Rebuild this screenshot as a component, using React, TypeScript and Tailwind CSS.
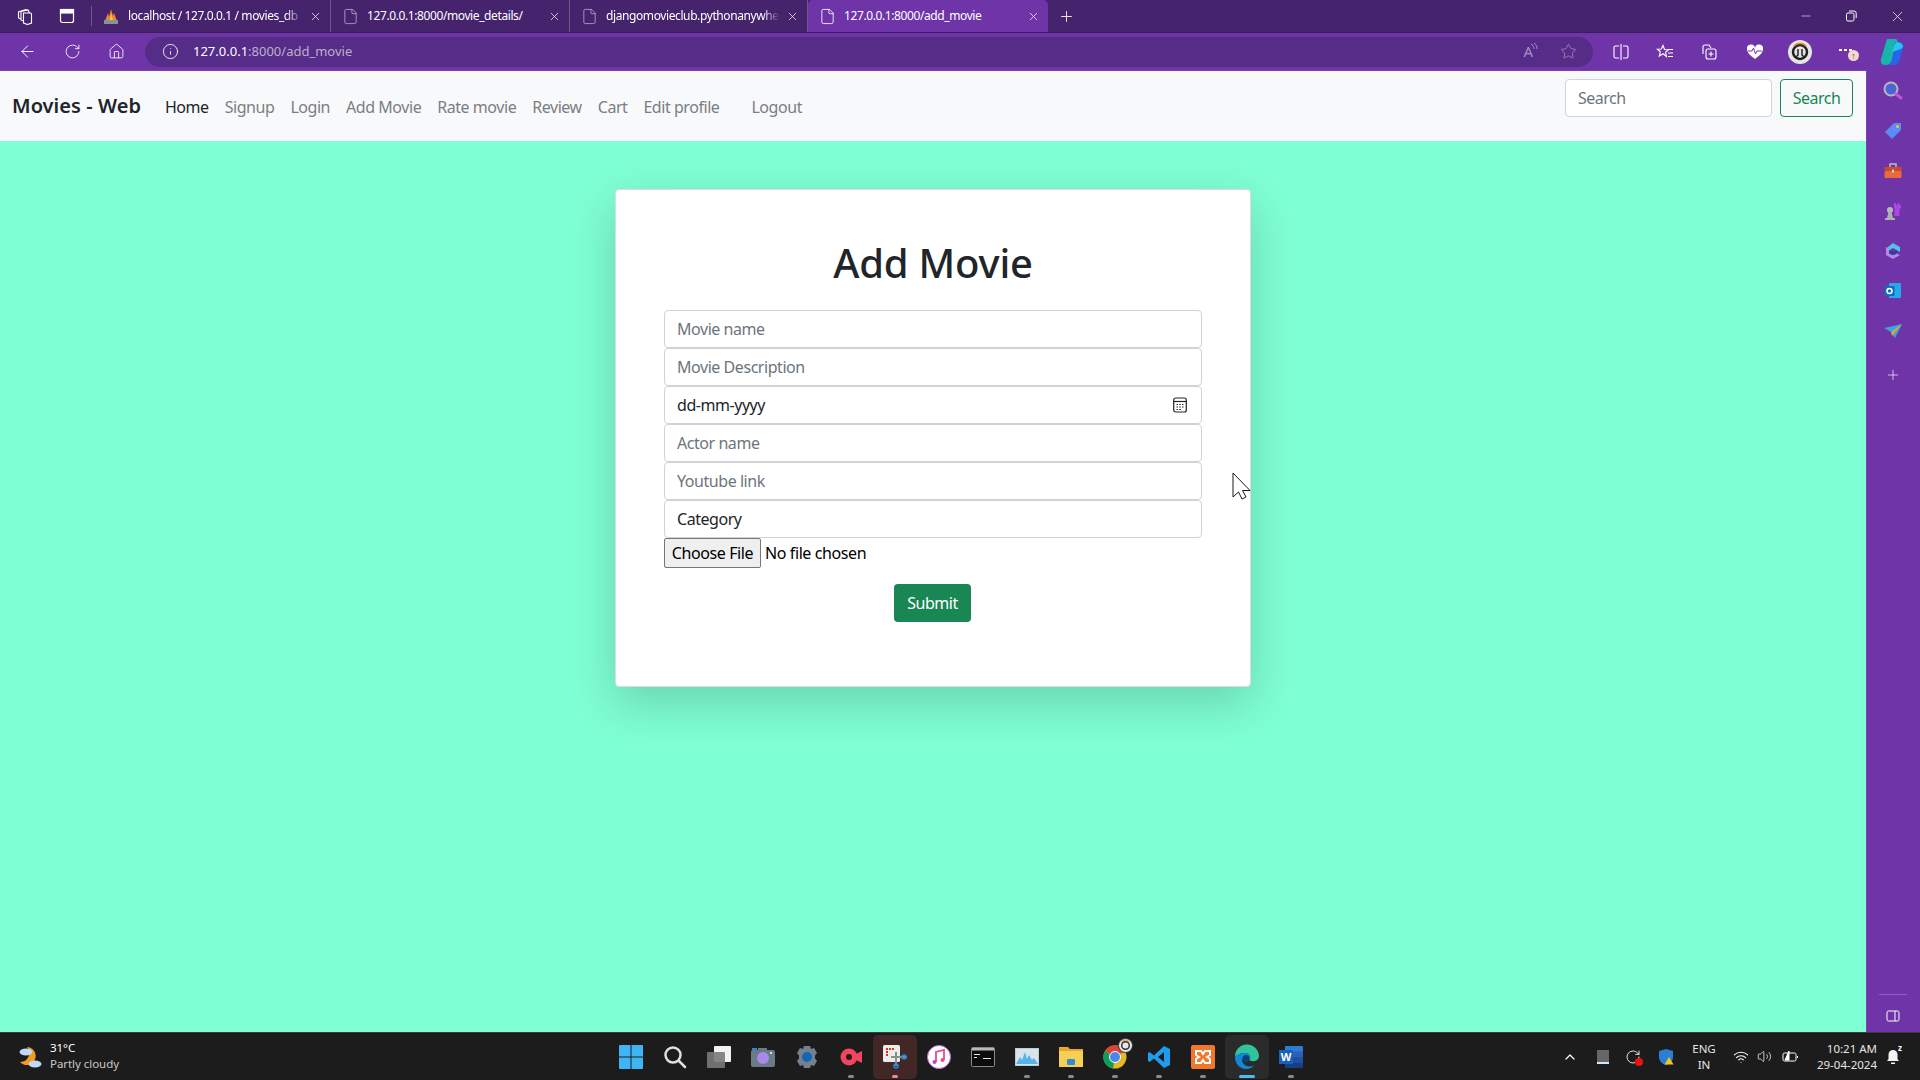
import React from "react";
import { ArrowLeft, RotateCw, Home, Info, Star, Plus, X, Minus, File, ChevronUp, Wifi, Volume2 } from "lucide-react";

const font = "font-['Noto_Sans','Liberation_Sans',sans-serif]";

function Tab({ icon, text, w, active, fade }: { icon: React.ReactNode; text: string; w: string; active?: boolean; fade?: boolean }) {
  return (
    <div className={`${w} h-[32px] flex items-center shrink-0 pl-[10px] pr-[8px] ${active ? "bg-[#6f35a8] rounded-t-[5px]" : "border-r border-[#6c5a85]"}`}>
      <span className="w-[18px] h-[18px] flex items-center justify-center shrink-0">{icon}</span>
      <span className={`ml-[8px] flex-1 text-[12px] tracking-[-0.4px] text-white whitespace-nowrap overflow-hidden ${fade ? "[mask-image:linear-gradient(to_right,black_90%,transparent)]" : ""}`}>{text}</span>
      <X size={13} strokeWidth={1.3} className="text-white shrink-0 ml-[6px]" />
    </div>
  );
}

function Field({ placeholder, value }: { placeholder?: string; value?: string }) {
  return (
    <input
      readOnly
      placeholder={placeholder}
      value={value ?? ""}
      className="block w-full h-[38px] shrink-0 px-[12px] bg-white border border-[#ced4da] rounded-[4px] text-[16px] tracking-[-0.45px] text-[#212529] placeholder:text-[#6c757d] outline-none"
    />
  );
}

function TaskIcon({ children, dot, active, ring }: { children: React.ReactNode; dot?: string; active?: boolean; ring?: string }) {
  return (
    <div className={`relative w-[44px] h-[44px] flex items-center justify-center rounded-[5px] ${ring ?? ""}`}>
      {children}
      {dot && <span className={`absolute bottom-[1px] left-1/2 -translate-x-1/2 h-[3px] rounded-full ${active ? "w-[16px]" : "w-[6px]"} ${dot}`} />}
    </div>
  );
}

function SideIcon({ children, mb }: { children: React.ReactNode; mb?: string }) {
  return <div className={`h-[40px] flex items-center justify-center ${mb ?? ""}`}>{children}</div>;
}

export default function App() {
  return (
    <div className={`${font} relative w-[1920px] h-[1080px] flex flex-col overflow-hidden bg-[#7fffd4]`}>
      {/* Tab strip */}
      <div className="h-[32px] shrink-0 bg-[#45246d] flex items-center">
        <div className="w-[92px] flex items-center pl-[17px] gap-[25px] shrink-0 h-[20px] border-r border-[#6c5a85]">
          <svg width="17" height="17" viewBox="0 0 17 17" fill="none" stroke="#fff" strokeWidth="1.1">
            <path d="M6.500 5h7a1 1 0 0 1 1 1v9l-4 1.500-4-1.500z" />
            <path d="M6.500 13 4 12V3.500l7-1.500 1.500 3" />
            <path d="M4 11 1.500 10V4l7-2.500L10 2.500" />
          </svg>
          <svg width="16" height="16" viewBox="0 0 16 16" fill="none" stroke="#fff" strokeWidth="1.2">
            <rect x="1.500" y="1.500" width="13" height="13" rx="2" />
            <rect x="1.500" y="1.500" width="13" height="3.500" fill="#fff" />
          </svg>
        </div>
        <Tab
          w="w-[239px]"
          fade
          text="localhost / 127.0.0.1 / movies_db"
          icon={
            <svg width="18" height="18" viewBox="0 0 18 18">
              <path d="M3 14 6 6l1 4 2-8 2 7 1-3 3 8z" fill="#e8892b" />
              <path d="M8 13 9 6l2 7z" fill="#f7c64d" />
              <rect x="2" y="13" width="14" height="4" fill="#8b8f9a" />
            </svg>
          }
        />
        <Tab w="w-[239px]" text="127.0.0.1:8000/movie_details/" icon={<File size={17} strokeWidth={1} className="text-[#c9bcd8]" />} />
        <Tab w="w-[238px]" fade text="djangomovieclub.pythonanywhe" icon={<File size={17} strokeWidth={1} className="text-[#c9bcd8]" />} />
        <Tab w="w-[240px]" active text="127.0.0.1:8000/add_movie" icon={<File size={17} strokeWidth={1.2} className="text-white" />} />
        <Plus size={17} strokeWidth={1.2} className="text-white ml-[10px]" />
        <div className="flex-1" />
        <div className="flex items-center text-white pr-[14px] gap-[31px]">
          <Minus size={14} strokeWidth={1} />
          <svg width="14" height="14" viewBox="0 0 14 14" fill="none" stroke="#fff" strokeWidth="1">
            <rect x="2.500" y="4" width="7.500" height="8" rx="1.500" />
            <path d="M5 2h5a2.200 2.200 0 0 1 2.200 2.200V9" />
          </svg>
          <X size={17} strokeWidth={1} />
        </div>
      </div>

      {/* Toolbar */}
      <div className="h-[38px] shrink-0 bg-[#6f35a8] border-t border-[#3a1d5f] flex items-center pl-[18px]">
        <ArrowLeft size={19} strokeWidth={1.2} className="text-white" />
        <RotateCw size={17} strokeWidth={1.2} className="text-white ml-[27px]" />
        <Home size={17} strokeWidth={1.2} className="text-white ml-[27px]" />
        <div className="ml-[20px] w-[1448px] h-[30px] rounded-full bg-[#562c89] flex items-center pl-[17px] pr-[16px]">
          <Info size={17} strokeWidth={1.2} className="text-white" />
          <span className="ml-[14px] text-[13px] text-white">
            127.0.0.1<span className="text-[#bcb0cc]">:8000/add_movie</span>
          </span>
          <div className="flex-1" />
          <span className="text-[#a88fc4] text-[15px] leading-none mr-[-3px]">A</span>
          <svg width="8" height="14" viewBox="0 0 8 14" fill="none" stroke="#a88fc4" strokeWidth="1" className="mb-[6px]">
            <path d="M1 2c2 1 3 3 3 5M4 1c2 1.500 3 3 3 6" />
          </svg>
          <Star size={17} strokeWidth={1.1} className="text-[#a88fc4] ml-[22px]" />
        </div>
        <div className="flex items-center ml-[20px]">
          <svg width="16" height="18" viewBox="0 0 16 18" fill="none" stroke="#fff" strokeWidth="1.100">
            <path d="M6 3H2.500a1.500 1.500 0 0 0-1.500 1.500v9A1.500 1.500 0 0 0 2.500 15H6M10 3h3.500A1.500 1.500 0 0 1 15 4.500v9a1.500 1.500 0 0 1-1.500 1.500H10M8 1v16" />
          </svg>
          <svg width="18" height="18" viewBox="0 0 18 18" fill="none" stroke="#fff" strokeWidth="1.100" className="ml-[27px]">
            <path d="M7 2.500l1.500 4 4 .2-3 2.600 1 4.200L7 10.700 3.300 13l1-4.200-3-2.600 4-.2zM12 6.500h5M12 10h5M12 13.500h5" />
          </svg>
          <svg width="18" height="18" viewBox="0 0 18 18" fill="none" stroke="#fff" strokeWidth="1.100" className="ml-[26px]">
            <path d="M3 11V4a2 2 0 0 1 2-2h4l2 3" />
            <rect x="6" y="6" width="10" height="10" rx="2" />
            <path d="M11 8.500v5M8.500 11h5" />
          </svg>
          <svg width="18" height="18" viewBox="0 0 18 18" className="ml-[28px]">
            <path d="M9 16C5 13 1 10 1 6a4 4 0 0 1 8-1 4 4 0 0 1 8 1c0 4-4 7-8 10z" fill="#fff" />
            <path d="M2 8h4l1.500-3 2 6 1.500-3h5" fill="none" stroke="#6f35a8" strokeWidth="1" />
          </svg>
          <svg width="26" height="26" viewBox="0 0 26 26" className="ml-[23px]">
            <circle cx="13" cy="13" r="12" fill="#e5e5e5" />
            <circle cx="13" cy="13" r="7" fill="none" stroke="#222" strokeWidth="2.500" />
            <path d="M7 7a8 8 0 0 1 12 0" fill="none" stroke="#e8892b" strokeWidth="1.800" />
            <path d="M11 10v6l-2 2M15 10v6l2 2" fill="none" stroke="#222" strokeWidth="1.500" />
          </svg>
          <div className="relative w-[24px] h-[18px] ml-[23px]">
            <span className="absolute left-[3px] top-[6px] w-[3px] h-[2px] bg-white" />
            <span className="absolute left-[8px] top-[6px] w-[3px] h-[2px] bg-white" />
            <span className="absolute left-[13px] top-[6px] w-[3px] h-[2px] bg-white" />
            <span className="absolute left-[12px] top-[7px] w-[11px] h-[11px] rounded-full bg-[#f3d8c8] text-[#6f35a8] text-[9px] leading-[11px] text-center font-bold">↑</span>
          </div>
          <svg width="26" height="28" viewBox="0 0 26 28" className="ml-[19px]">
            <path d="M8 1h8c2 0 3 1 2 4L13 22c-1 3-3 5-6 5-4 0-6-2-5-6z" fill="#17b6a8" />
            <path d="M16 4h4c3 0 5 2 4 6l-3 11c-1 4-3 6-7 6H7c3 0 5-2 6-5z" fill="#2a62ea" />
            <path d="M17 4c-2 4-3 7-4 10l6-2c3-1 5-2 5-4-1-2-3-4-7-4z" fill="#26c6f0" />
          </svg>
        </div>
      </div>

      {/* Body */}
      <div className="h-[962px] shrink-0 flex">
        <div className="w-[1866px] shrink-0 flex flex-col border-t border-[#7d3fb8] bg-[#7fffd4]">
          {/* Navbar */}
          <nav className="h-[70px] shrink-0 bg-[#f8f9fa] flex items-center pl-[12px] pr-[13px]">
            <span className="text-[20px] tracking-[0.05px] font-semibold text-[#212529] leading-none mr-[24px]">Movies - Web</span>
            <div className="flex items-center gap-[16px] text-[16px] tracking-[-0.45px] text-[#7b7e82] mt-[1px]">
              <span className="text-[#212529]">Home</span>
              <span>Signup</span>
              <span>Login</span>
              <span>Add Movie</span>
              <span>Rate movie</span>
              <span>Review</span>
              <span>Cart</span>
              <span>Edit profile</span>
              <span className="ml-[16px]">Logout</span>
            </div>
            <div className="flex-1" />
            <div className="flex items-center gap-[8px] mb-[16px]">
              <input
                readOnly
                placeholder="Search"
                className="w-[207px] h-[38px] px-[12px] bg-white border border-[#ced4da] rounded-[4px] text-[16px] tracking-[-0.5px] placeholder:text-[#6c757d] outline-none"
              />
              <button className="w-[73px] h-[38px] border border-[#198754] rounded-[4px] text-[#198754] text-[16px] tracking-[-0.5px]">Search</button>
            </div>
          </nav>
          {/* Page */}
          <div className="flex-1 flex justify-center items-start pt-[48px]">
            <div className="w-[636px] h-[498px] bg-white rounded-[4px] border border-[#d9dedc] shadow-[0_16px_48px_rgba(0,0,0,0.175)] px-[48px] flex flex-col">
              <h1 className="text-center text-[40px] tracking-[-0.2px] font-medium text-[#212529] leading-[48px] mt-[49px] mb-[23px]">Add Movie</h1>
              <div className="flex flex-col">
                <Field placeholder="Movie name" />
                <Field placeholder="Movie Description" />
                <div className="relative">
                  <Field value="dd-mm-yyyy" />
                  <svg width="14" height="16" viewBox="0 0 14 16" fill="none" stroke="#212529" strokeWidth="1.200" className="absolute right-[15px] top-[11px]">
                    <rect x="0.700" y="1" width="12.600" height="14" rx="2" />
                    <path d="M0.700 4.500h12.600" />
                    <path d="M3.500 7.500h1.500M6.300 7.500h1.500M9 7.500h1.500M3.500 10h1.500M6.300 10h1.500M9 10h1.500M3.500 12.500h1.500M6.300 12.500h1.500" />
                  </svg>
                </div>
                <Field placeholder="Actor name" />
                <Field placeholder="Youtube link" />
                <Field value="Category" />
                <div className="flex items-center h-[30px] text-[16px] tracking-[-0.4px] text-black">
                  <button className="w-[97px] h-[30px] bg-[#efefef] border border-[#767676] rounded-[2px]">Choose File</button>
                  <span className="ml-[4px]">No file chosen</span>
                </div>
              </div>
              <div className="flex justify-center mt-[16px]">
                <button className="w-[77px] h-[38px] mr-[1px] bg-[#198754] rounded-[4px] text-white text-[16px] tracking-[-0.5px]">Submit</button>
              </div>
            </div>
          </div>
        </div>

        {/* Edge sidebar */}
        <div className="w-[54px] shrink-0 bg-[#6f35a8] border-l border-[#7d3fb8] flex flex-col items-center pt-[1px] pr-[2px]">
          <SideIcon>
            <svg width="20" height="20" viewBox="0 0 20 20">
              <circle cx="8" cy="8" r="6.500" fill="#4a64d8" stroke="#b7b7b7" strokeWidth="2" />
              <path d="m13 13 5 4" stroke="#c74fe0" strokeWidth="3" strokeLinecap="round" />
            </svg>
          </SideIcon>
          <SideIcon>
            <svg width="18" height="18" viewBox="0 0 18 18">
              <path d="M10 1h7v7l-9 9-7-7z" fill="#5a8cf5" />
              <circle cx="13.500" cy="4.500" r="1.500" fill="#f5c518" />
            </svg>
          </SideIcon>
          <SideIcon>
            <svg width="18" height="18" viewBox="0 0 18 18">
              <path d="M6 5V2h6v3" fill="none" stroke="#bdbdbd" strokeWidth="1.500" />
              <rect x="0.500" y="5" width="17" height="4" fill="#cc4a26" />
              <rect x="0.500" y="9" width="17" height="7" rx="1" fill="#ea6a3a" />
              <rect x="8" y="7.500" width="2" height="3" fill="#d4d4d4" />
            </svg>
          </SideIcon>
          <SideIcon>
            <svg width="18" height="19" viewBox="0 0 18 19">
              <path d="M10 1h2v2h1.500V1h2v2H17v3l-1.500 1v7h-5V7L10 6z" fill="#a848e0" />
              <circle cx="6" cy="8" r="3" fill="#b8b8b8" />
              <path d="M4.500 10h3l1.500 6h-6zM1 16h10v2H1z" fill="#b0b0b0" />
            </svg>
          </SideIcon>
          <SideIcon>
            <svg width="18" height="18" viewBox="0 0 18 18">
              <path d="M9 1 16 5v5L9 6 4 9V5z" fill="#4fc3e8" />
              <path d="M2 5v8l7 4 7-4-7-3-4 2V6z" fill="#b18be0" />
              <path d="M5 9a4 4 0 1 0 8 0" fill="#3b3aa0" />
            </svg>
          </SideIcon>
          <SideIcon>
            <svg width="18" height="18" viewBox="0 0 18 18">
              <rect x="5" y="1" width="12" height="15" rx="1" fill="#28a8ea" />
              <rect x="0.500" y="4" width="10" height="10" rx="1" fill="#0f6cbd" />
              <circle cx="5.500" cy="9" r="2.500" fill="none" stroke="#fff" strokeWidth="1.500" />
            </svg>
          </SideIcon>
          <SideIcon mb="mb-[4px]">
            <svg width="18" height="14" viewBox="0 0 18 14">
              <path d="M0 4 18 0 11 14 7 8z" fill="#3ba4e6" />
              <path d="M7 8 18 0 8 12z" fill="#e8a32b" />
            </svg>
          </SideIcon>
          <SideIcon>
            <Plus size={16} strokeWidth={1} className="text-white" />
          </SideIcon>
          <div className="flex-1" />
          <div className="w-[28px] h-px bg-[#8d60bf] mb-[14px]" />
          <svg width="14" height="14" viewBox="0 0 14 14" fill="none" stroke="#fff" strokeWidth="1" className="mb-[9px]">
            <rect x="1" y="2" width="12" height="10" rx="1.500" />
            <path d="M9 2v10" />
          </svg>
        </div>
      </div>

      {/* Taskbar */}
      <div className="h-[48px] shrink-0 bg-[#1c1c1c] border-t border-[#3b3b3b] flex items-center text-white">
        <div className="w-[609px] shrink-0 flex items-center pl-[18px]">
          <svg width="26" height="26" viewBox="0 0 26 26">
            <path d="M9 3a9 9 0 1 1-7 15 9 9 0 0 0 7-15z" fill="#f09a21" />
            <ellipse cx="8" cy="8" rx="6.500" ry="3.500" fill="#c3d8f5" />
            <ellipse cx="17" cy="20" rx="6.500" ry="3.500" fill="#c3d8f5" />
          </svg>
          <div className="ml-[6px] mb-[2px] text-[11.500px] leading-[16px] tracking-[-0.05px]">
            <div>31°C</div>
            <div className="text-[#c8c8c8]">Partly cloudy</div>
          </div>
        </div>
        <div className="flex items-center">
          <TaskIcon>
            <svg width="24" height="24" viewBox="0 0 24 24">
              <path d="M0 1a1 1 0 0 1 1-1h10.500v11.500H0zM12.500 0H23a1 1 0 0 1 1 1v10.500H12.500zM0 12.500h11.500V24H1a1 1 0 0 1-1-1zM12.500 12.500H24V23a1 1 0 0 1-1 1H12.500z" fill="#3fb5f5" />
            </svg>
          </TaskIcon>
          <TaskIcon>
            <svg width="24" height="24" viewBox="0 0 24 24" fill="none" stroke="#e0e0e0" strokeWidth="2.500">
              <circle cx="10" cy="10" r="7.500" />
              <path d="m16 16 6 6" strokeLinecap="round" />
            </svg>
          </TaskIcon>
          <TaskIcon>
            <svg width="24" height="24" viewBox="0 0 24 24">
              <rect x="7" y="1" width="17" height="16" rx="1" fill="#f2f2f2" />
              <rect x="0" y="7" width="18" height="16" rx="1" fill="#7a7a7a" fillOpacity="0.9" />
            </svg>
          </TaskIcon>
          <TaskIcon>
            <svg width="24" height="20" viewBox="0 0 24 20">
              <rect x="0" y="3" width="24" height="17" rx="2" fill="#6b7a88" />
              <rect x="7" y="1" width="9" height="4" fill="#6b7a88" />
              <rect x="1" y="1" width="5" height="2" fill="#2b88d8" />
              <circle cx="12" cy="11" r="6" fill="#a98ae8" />
              <circle cx="20" cy="6" r="1" fill="#fff" />
            </svg>
          </TaskIcon>
          <TaskIcon>
            <svg width="24" height="24" viewBox="0 0 24 24">
              <path d="M9 1h6l1 3 3-1 3 5-2 2.500v3l2 2.500-3 5-3-1-1 3H9l-1-3-3 1-3-5 2-2.500v-3L2 8l3-5 3 1z" fill="#74828f" />
              <circle cx="12" cy="12" r="5" fill="#1565b5" />
            </svg>
          </TaskIcon>
          <TaskIcon dot="bg-[#8a8a8a]">
            <svg width="22" height="20" viewBox="0 0 22 20">
              <circle cx="9" cy="10" r="8.500" fill="#f0465e" />
              <circle cx="9" cy="10" r="3" fill="#2a1a1e" />
              <path d="M14 8l8-4v12l-8-4z" fill="#f0465e" />
            </svg>
          </TaskIcon>
          <TaskIcon dot="bg-[#f08a8a]" ring="bg-[#432626]">
            <svg width="26" height="26" viewBox="0 0 26 26">
              <rect x="1" y="1" width="17" height="17" rx="1.500" fill="#ececec" />
              <path d="M4 4h2v2H4zM7 4h2v2H7zM10 4h2v2h-2zM4 7h2v2H4zM4 10h2v2H4z" fill="#d43a16" />
              <path d="M9 13h16M14 8v14" stroke="#8d8d8d" strokeWidth="2" />
              <circle cx="22" cy="13" r="2" fill="none" stroke="#1d8fe0" strokeWidth="1.500" />
              <circle cx="14" cy="22" r="2" fill="none" stroke="#1d8fe0" strokeWidth="1.500" />
            </svg>
          </TaskIcon>
          <TaskIcon>
            <svg width="24" height="24" viewBox="0 0 24 24">
              <circle cx="12" cy="12" r="11.500" fill="#fff" stroke="#c56bd8" strokeWidth="1" />
              <path d="M9 17V7l8-2v10" fill="none" stroke="#e94a8a" strokeWidth="1.800" />
              <circle cx="7.500" cy="17" r="2" fill="#b04ae0" />
              <circle cx="15.500" cy="15" r="2" fill="#e94a8a" />
            </svg>
          </TaskIcon>
          <TaskIcon>
            <svg width="24" height="20" viewBox="0 0 24 20">
              <rect x="0.500" y="0.500" width="23" height="19" rx="1" fill="#0c0c0c" stroke="#8a8a8a" />
              <rect x="1" y="1" width="22" height="2.500" fill="#b9b9b9" />
              <path d="M3 7h6v1H3zM3 10h3v1H3zM12 11h8v1h-8z" fill="#e8e8e8" />
            </svg>
          </TaskIcon>
          <TaskIcon dot="bg-[#8a8a8a]">
            <svg width="24" height="18" viewBox="0 0 24 18">
              <rect width="24" height="18" fill="#d9e3ec" stroke="#9bb" />
              <path d="M1 16 5 9l2 3 3-8 2 7 2-4 3 5 2-2 4 6z" fill="#58b3ea" />
            </svg>
          </TaskIcon>
          <TaskIcon dot="bg-[#8a8a8a]">
            <svg width="24" height="22" viewBox="0 0 24 22">
              <path d="M0 1h9l2 2h13v17H0z" fill="#e8a92a" />
              <rect x="0" y="5" width="24" height="16" fill="#f8cf55" />
              <rect x="8" y="13" width="8" height="6" rx="1" fill="#2a8fd8" />
            </svg>
          </TaskIcon>
          <TaskIcon dot="bg-[#8a8a8a]">
            <div className="relative w-[24px] h-[24px]">
              <svg width="24" height="24" viewBox="0 0 24 24">
                <circle cx="12" cy="12" r="11.500" fill="#e6b822" />
                <path d="M12 12 2 6a11.500 11.500 0 0 1 20 0z" fill="#db4437" />
                <path d="M12 12 2 6a11.500 11.500 0 0 0 8 17.500z" fill="#0f9d58" />
                <circle cx="12" cy="12" r="5.500" fill="#4a86e8" stroke="#fff" strokeWidth="1" />
              </svg>
              <svg width="15" height="15" viewBox="0 0 15 15" className="absolute -right-[6px] -top-[7px]">
                <circle cx="7.500" cy="7.500" r="7" fill="#e8e8e8" stroke="#333" />
                <circle cx="7.500" cy="7.500" r="3.800" fill="none" stroke="#333" strokeWidth="1.500" />
                <path d="M3.500 4a5 5 0 0 1 8 0" fill="none" stroke="#e8892b" strokeWidth="1" />
              </svg>
            </div>
          </TaskIcon>
          <TaskIcon dot="bg-[#8a8a8a]">
            <svg width="24" height="24" viewBox="0 0 24 24">
              <path d="M17 1 23 4v16l-6 3L7 13.500 2.500 17 1 16v-8l1.500-1L7 10.500z" fill="#1f9cf0" />
              <path d="M17 7 11 12l6 5z" fill="#1c1c1c" />
            </svg>
          </TaskIcon>
          <TaskIcon dot="bg-[#8a8a8a]">
            <svg width="24" height="24" viewBox="0 0 24 24">
              <rect width="24" height="24" rx="2" fill="#f0782a" />
              <path d="M5 6h5l2 3 2-3h5v4l-3 2 3 2v4h-5l-2-3-2 3H5v-4l3-2-3-2z" fill="none" stroke="#fff" strokeWidth="2" />
            </svg>
          </TaskIcon>
          <TaskIcon dot="bg-[#4fb9f0]" active ring="bg-[#2b2b2b]">
            <svg width="26" height="26" viewBox="0 0 26 26">
              <path d="M1 13a12 12 0 0 1 24-1c0 3-3 6-7 5-2 0-3-1-2-2 1-3-1-6-5-6-5 0-8 2-10 4z" fill="#2fc49a" />
              <path d="M1 13c2-2 5-4 10-4 4 0 6 3 5 6-1 2-3 3-5 2-2 0-3-2-3-3-1 4 3 10 10 8 1 0 2-1 3-2-2 3-5 5-9 5C6 25 1 20 1 13z" fill="#1488d8" />
              <circle cx="12" cy="14.500" r="3.500" fill="#0d3f78" />
            </svg>
          </TaskIcon>
          <TaskIcon dot="bg-[#8a8a8a]">
            <div className="relative w-[24px] h-[22px]">
              <svg width="24" height="22" viewBox="0 0 24 22">
                <rect x="6" y="0" width="18" height="22" rx="1" fill="#2b7cd3" />
                <rect x="6" y="5.500" width="18" height="5.500" fill="#2b5fb8" />
                <rect x="6" y="11" width="18" height="5.500" fill="#1f4fa0" />
                <rect x="6" y="16.500" width="18" height="5.500" fill="#173f85" />
              </svg>
              <span className="absolute left-0 top-[4px] w-[14px] h-[14px] bg-[#1b5ebe] text-white text-[11px] leading-[14px] text-center font-bold">W</span>
            </div>
          </TaskIcon>
        </div>
        <div className="flex-1" />
        <div className="flex items-center pr-[20px]">
          <ChevronUp size={16} strokeWidth={1.8} className="text-white" />
          <svg width="12" height="14" viewBox="0 0 12 14" className="ml-[19px]">
            <rect width="12" height="14" fill="#666" />
            <rect y="12" width="12" height="2" fill="#cfe8fb" />
          </svg>
          <div className="relative ml-[16px] w-[16px] h-[16px]">
            <RotateCw size={16} strokeWidth={1.3} className="text-white" />
            <span className="absolute -right-[2px] -bottom-[1px] w-[8px] h-[8px] rounded-full bg-[#f01010]" />
          </div>
          <svg width="16" height="16" viewBox="0 0 16 16" className="ml-[17px]">
            <path d="M8 0 15 2v6c0 4-3 7-7 8-4-1-7-4-7-8V2z" fill="#2a7fd4" />
            <path d="M11 8l4.500 7.500h-9z" fill="#f5c518" />
          </svg>
          <div className="ml-[10px] w-[40px] text-center text-[11.500px] leading-[16px] text-[#e6e6e6]">
            <div>ENG</div>
            <div>IN</div>
          </div>
          <Wifi size={16} strokeWidth={1.6} className="text-white ml-[9px]" />
          <Volume2 size={15} strokeWidth={1.2} className="text-white ml-[8px]" />
          <svg width="17" height="13" viewBox="0 0 17 13" fill="none" stroke="#fff" strokeWidth="1" className="ml-[10px]">
            <rect x="1" y="3" width="13" height="8" rx="1.500" />
            <path d="M15.500 6v2" />
            <path d="M3 10 7 1v9z" fill="#fff" />
          </svg>
          <div className="ml-[13px] w-[65px] text-right text-[11.500px] leading-[16px] text-[#e6e6e6] whitespace-nowrap">
            <div>10:21 AM</div>
            <div>29-04-2024</div>
          </div>
          <div className="relative ml-[9px]">
            <svg width="14" height="16" viewBox="0 0 14 16">
              <path d="M7 1a4.500 4.500 0 0 1 4.500 4.500V10L13 12H1l1.500-2V5.500A4.500 4.500 0 0 1 7 1z" fill="#f2f2f2" />
              <path d="M5 13.500h4v1.500H5z" fill="#f2f2f2" />
            </svg>
            <span className="absolute -right-[2px] -top-[5px] text-[8px] leading-none font-bold text-white">z</span>
          </div>
        </div>
      </div>

      {/* Mouse cursor overlay */}
      <svg width="20" height="28" viewBox="0 0 20 28" className="absolute left-[1232px] top-[472px]">
        <path d="M1 1v24l5.500-5 3.500 7 4-2-3.500-6.500H18z" fill="#fff" stroke="#1a1a1a" strokeWidth="1" />
      </svg>
    </div>
  );
}
